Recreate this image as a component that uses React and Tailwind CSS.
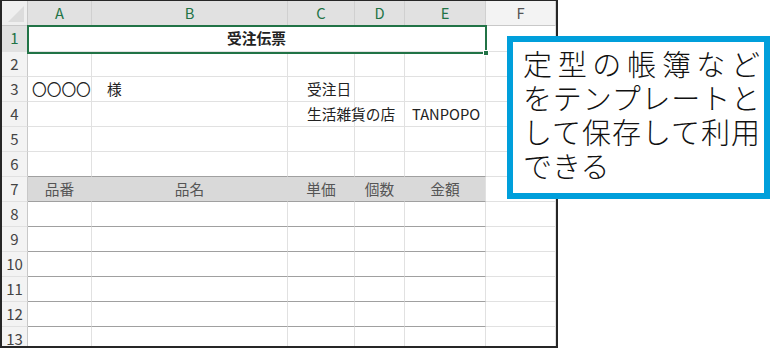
import React from "react";

const FONT = { fontFamily: '"Noto Sans CJK JP", "Noto Sans", sans-serif' };

const cols = ["A", "B", "C", "D", "E", "F"];

function Cell({ children, className = "" }) {
  return (
    <div className={"flex items-center overflow-visible whitespace-nowrap border-r border-b border-[#e1e1e1] " + className}>
      {children}
    </div>
  );
}

function RowHead({ n, sel }) {
  return (
    <div
      className={
        "flex items-center justify-center border-r border-b border-r-[#c8c8c8] border-b-[#e1e1e1] text-[15px] " +
        (sel ? "bg-[#e1e1e1] text-[#217346]" : "bg-[#f3f3f3] text-[#444]")
      }
    >
      {n}
    </div>
  );
}

export default function App() {
  const rows = [];
  rows.push(
    <React.Fragment key="r1">
      <RowHead n={1} sel />
      <div className="col-span-5 flex items-center justify-center border-b border-r border-[#e1e1e1] text-[14.7px] font-bold text-[#222]">
        受注伝票
      </div>
      <Cell />
    </React.Fragment>
  );
  for (let r = 2; r <= 13; r++) {
    const thickBottom = r >= 6 && r <= 12;
    const content = {
      3: ["〇〇〇〇", "様", "受注日", "", "", ""],
      4: ["", "", "生活雑貨の店", "", "TANPOPO", ""],
      7: ["品番", "品名", "単価", "個数", "金額", ""],
    }[r] || ["", "", "", "", "", ""];
    rows.push(
      <React.Fragment key={"r" + r}>
        <RowHead n={r} />
        {cols.map((c, i) => {
          const inTable = i < 5;
          let cls = "";
          if (inTable && r === 7) cls += " bg-[#d9d9d9] border-r-[#d9d9d9] justify-center text-[#555]";
          else cls += " text-[#222]";
          if (inTable && thickBottom) cls += " border-b-[#a0a0a0]";
          if (r === 7 && i === 4) cls += " border-r-[#e1e1e1]";
          if (r === 3 && i === 0) cls += " pl-[4px]";
          if (r === 3 && i === 1) cls += " pl-[15px]";
          if ((r === 3 || r === 4) && i === 2) cls += " pl-[19px]";
          if (r === 4 && i === 4) cls += " pl-[7px]";
          return (
            <Cell key={c} className={cls + " text-[14.7px]"}>
              {content[i]}
            </Cell>
          );
        })}
      </React.Fragment>
    );
  }

  return (
    <div className="relative h-[348px] w-[783px] overflow-hidden bg-white" style={FONT}>
      <div className="relative h-[348px] w-[558px] overflow-hidden border-x-2 border-b-2 border-t border-[#262626]">
        <div className="grid grid-cols-[26px_64px_196px_67px_50px_81px_70px] grid-rows-[25px_26px_repeat(12,25px)]">
          <div className="relative border-r border-b border-r-[#c8c8c8] border-b-[#c8c8c8] bg-[#efefef]">
            <svg className="absolute bottom-[3px] right-[3px]" width="16" height="16" viewBox="0 0 16 16">
              <polygon points="16,0 16,16 0,16" fill="#dcdcdc" />
            </svg>
          </div>
          {cols.map((c, i) => (
            <div
              key={c}
              className={
                "flex items-center justify-center border-r border-b border-r-[#d0d0d0] border-b-[#c8c8c8] text-[14.7px] " +
                (i < 5 ? "bg-[#e1e1e1] text-[#217346]" : "bg-[#f3f3f3] text-[#555]")
              }
            >
              {c}
            </div>
          ))}
          {rows}
        </div>
        <div className="absolute left-[25px] top-[24px] h-[29px] w-[460px] border-2 border-[#217346]" />
        <div className="absolute left-[481px] top-[49px] h-[6px] w-[6px] border border-white bg-[#217346]" />
      </div>
      <div className="absolute left-[507px] top-[36px] h-[163px] w-[263px] border-[6px] border-[#009fdb] bg-white pl-[10px] pr-[4px] pt-[4px] text-[29px] font-light leading-[34px] text-[#111]">
        <div className="[text-align-last:justify]">定型の帳簿など</div>
        <div className="[text-align-last:justify]">をテンプレートと</div>
        <div className="[text-align-last:justify]">して保存して利用</div>
        <div>できる</div>
      </div>
    </div>
  );
}
